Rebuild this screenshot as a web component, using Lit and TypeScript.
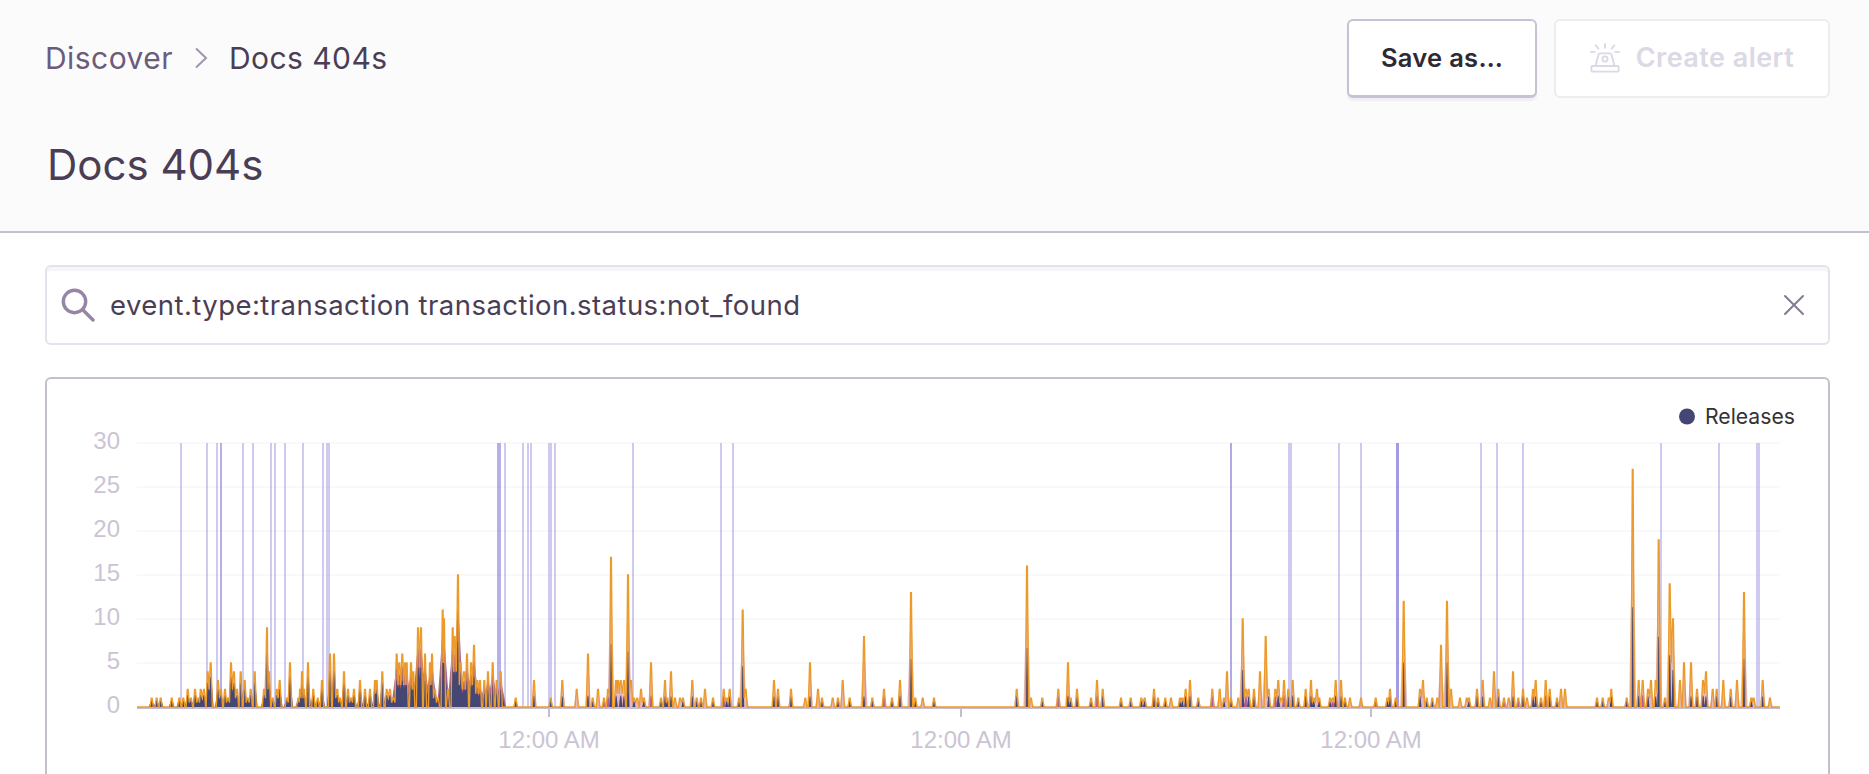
import { LitElement, html, css, svg } from "lit";
import { customElement } from "lit/decorators.js";

const RAW: [number, number[]][] = [
  [80, [215,1,230,1,242,1,275,1,298,1,310,1,323,2,333,1,345,2,355,1,362,2,372,2,383,4,392,5,414,3,423,2,435,2,444,1,453,5,462,4,471,2,482,4,494,3,503,1,512,2,524,4,552,2,561,9,567,4,578,1,590,2,599,3,620,1,630,5,655,1,660,2,666,4,672,2,684,5,700,2,713,1,726,3,750,6,762,6,772,2,780,1,792,4,804,2,813,1,822,2,840,3,855,2,870,2,885,3,890,3,907,4,920,2,930,2,940,1,950,6,958,5,967,6,975,5,980,5,993,5,1000,4,1014,9,1023,9,1035,6,1050,5,1056,6,1065,2,1074,1,1088,11,1092,10,1104,2,1118,9,1124,8,1134,15,1142,5,1152,4,1161,6,1173,5,1182,7,1192,3,1200,3,1213,3,1224,4,1238,5,1250,3,1262,4,1307,1]],
  [530, [12,3,62,1,97,3,140,2,174,6,188,1,204,2,222,1,234,2,243,17,258,3,264,3,272,3,282,3,294,15,303,3,312,1,322,1,333,2,342,1,363,5,393,1,405,3,412,1,423,4,435,1,450,1,459,1,487,3,500,1,513,1,525,2,549,1,581,2,590,1,599,2,627,1,638,11,647,2,732,3,744,2,783,2,826,1,840,5,864,2,876,1,908,1,924,1,938,3,959,1,1002,8,1027,1,1062,2,1086,1,1110,3,1143,13,1156,1,1178,1,1212,1]],
  [980, [110,2,141,16,153,1,187,1,235,2,264,5,272,1,291,2,333,1,351,3,368,2,423,1,452,1,484,1,494,1,522,2,534,1,556,1,573,1,600,1,607,1,617,2,630,3,655,1,697,2,719,2,732,1,741,4,753,1,775,1,788,10,798,2,806,2,822,2,840,4,857,8,866,2,886,2,895,3,904,1,912,3,925,2,938,3,955,1,977,2,993,3,1001,1,1011,2,1018,1,1050,1,1058,1,1067,3,1083,3,1095,1,1110,1,1143,1,1187,1,1222,1,1230,2,1247,1,1271,12,1320,2,1329,3,1340,1]],
  [1430, [7,1,22,1,33,7,51,12,63,2,90,1,110,1,117,1,141,2,158,3,180,1,192,4,205,2,222,1,236,1,249,4,265,1,279,2,291,1,309,2,317,3,333,1,347,3,359,2,381,1,393,2,405,2,501,1,518,1,536,1,544,2,590,1,608,27,626,3,638,3,654,2,663,3,677,3,686,19,705,1,719,14,729,10,750,3,762,5,783,5,801,2,819,3,828,4,848,2,860,2,880,3,902,2,921,3,942,13,964,1,971,1,998,3,1020,1]],
];

type Peak = { x: number; v: number };
const PEAKS: Peak[] = [];
for (const [base, list] of RAW) {
  for (let i = 0; i < list.length; i += 2) PEAKS.push({ x: base + list[i] / 3, v: list[i + 1] });
}

const RELEASES: [number, number, number][] = [
  [181,2,.36],[207,2,.36],[217,2,.36],[221,2,.55],[243,2,.36],[253,2,.36],[271,2,.36],[275,2,.36],[285,2,.36],[303,2,.36],[323,2,.36],[328,4,.36],
  [499,4,.55],[505,2,.36],[523,2,.36],[528,2,.36],[531,2,.36],[550,4,.36],[555,2,.36],[633,2,.36],[721,2,.36],[733,2,.36],
  [1231,2,.6],[1290,4,.36],[1339,2,.36],[1361,2,.36],[1397,3,.7],[1481,2,.36],[1497,2,.36],[1523,2,.36],[1661,2,.36],[1719,2,.36],[1758,4,.36],
];

const X0 = 137, X1 = 1780, Y0 = 707, U = 8.8;
const Y = (v: number) => Y0 - v * U;
const hash = (n: number) => (Math.floor(n * 7.3) * 2654435761 >>> 0) % 97;

function linePath() {
  let d = `M${X0} ${Y0}`;
  PEAKS.forEach((p, i) => {
    const next = PEAKS[i + 1];
    const prev = PEAKS[i - 1];
    const top = Y(p.v);
    const gapPrev = prev ? p.x - prev.x : 99;
    if (gapPrev > 3.6) d += `L${(p.x - 1.6).toFixed(1)} ${Y0}`;
    d += `L${(p.x - 0.4).toFixed(1)} ${top.toFixed(1)}L${(p.x + 0.4).toFixed(1)} ${top.toFixed(1)}`;
    const gapNext = next ? next.x - p.x : 99;
    if (gapNext > 3.6) d += `L${(p.x + 1.6).toFixed(1)} ${Y0}`;
    else d += `L${(p.x + gapNext / 2).toFixed(1)} ${Y(Math.min(p.v, next.v) * 0.5).toFixed(1)}`;
  });
  return d + `L${X1} ${Y0}`;
}

function polys(h: (p: Peak) => number, w: (p: Peak) => number) {
  let d = "";
  for (const p of PEAKS) {
    const t = h(p);
    if (t <= 0) continue;
    const ww = w(p);
    d += `M${(p.x - ww).toFixed(1)} ${Y0}L${(p.x - 0.5).toFixed(1)} ${Y(t).toFixed(1)}L${(p.x + 0.5).toFixed(1)} ${Y(t).toFixed(1)}L${(p.x + ww).toFixed(1)} ${Y0}Z`;
  }
  return d;
}

const dense = (x: number) => x > 395 && x < 502;
const haloPath = polys((p) => p.v * 0.8, (p) => (p.v > 6 ? 3.6 : 3));
const pinkPath = polys(
  (p) => (dense(p.x) ? p.v * 0.74 : hash(p.x) % 3 === 0 ? Math.min(p.v * 0.6, 1.3) : 0),
  (p) => (dense(p.x) ? 5.5 : 2)
);
const navyPath = polys(
  (p) => {
    if (dense(p.x)) return Math.max(1, p.v * 0.5);
    if (p.x < 395) return Math.max(0.8, p.v * 0.68);
    if (p.v >= 9) return p.v * 0.42;
    return hash(p.x) % 5 < 3 ? Math.min(p.v * 0.65, 1.2) : 0;
  },
  (p) => (dense(p.x) ? 4.2 : p.x < 395 ? 2.8 : 1.5)
);
const LINE = linePath();

@customElement("app-root")
export class AppRoot extends LitElement {
  static styles = css`
    :host { display: block; height: 100vh; overflow: hidden; background: #fff; font-family: Inter, "Noto Sans", sans-serif; color: #4a3e56; }
    .header { height: 231px; box-sizing: border-box; background: #fbfbfb; padding: 19px 39px 0 45px; }
    .rule { height: 2px; background: #c6becf; }
    .top { display: flex; justify-content: space-between; align-items: flex-start; }
    .crumbs { display: flex; align-items: center; height: 78px; font-size: 30px; letter-spacing: 0.45px; }
    .crumb1 { color: #6c5c7c; }
    .chev { width: 14px; height: 22px; margin: 0 21px 0 21px; fill: none; stroke: #a294b0; stroke-width: 2; }
    .actions { display: flex; gap: 17px; }
    .btn { height: 79px; box-sizing: border-box; border-radius: 6px; background: #fff; display: flex; align-items: center; justify-content: center; font-weight: 600; padding-bottom: 2px; }
    .save { width: 190px; border: 2px solid #c9c1d3; border-bottom-width: 3px; color: #2f2936; box-shadow: 0 3px 2px rgba(70, 50, 100, 0.06); font-size: 25.5px; letter-spacing: 0.3px; }
    .alert { width: 276px; border: 2px solid #eeebf1; color: #dcd8e4; gap: 16px; font-size: 27px; letter-spacing: 0.45px; }
    .siren { width: 30px; height: 30px; fill: none; stroke: #dcd8e4; stroke-width: 2; stroke-linecap: round; stroke-linejoin: round; }
    h1 { margin: 37px 0 0 2px; font-size: 42px; line-height: 60px; font-weight: 400; color: #4a3e56; }
    .body { padding: 32px 39px 0 45px; }
    .search { height: 80px; box-sizing: border-box; border: 2px solid #e6e1ec; border-radius: 6px; box-shadow: inset 0 4px 0 #f6f6f9; display: flex; align-items: center; padding: 0 22px 0 14px; background: #fff; }
    .mag { width: 34px; height: 34px; fill: none; stroke: #9686a5; stroke-width: 3.4; stroke-linecap: round; flex: none; margin-right: 15px; }
    .q { flex: 1; font-size: 27.5px; letter-spacing: 0.45px; color: #4a3e56; }
    .x { width: 24px; height: 24px; fill: none; stroke: #857a92; stroke-width: 2; stroke-linecap: round; flex: none; }
    .panel { margin-top: 32px; height: 500px; box-sizing: border-box; border: 2px solid #c6becf; border-radius: 6px; background: #fff; }
    .chart { display: block; }
    .tick { font-family: "Liberation Sans", Arial, sans-serif; font-size: 24px; fill: #cbc4d4; }
    .leg { font-family: Inter, sans-serif; font-size: 21.2px; fill: #333; }
  `;

  render() {
    const grid = [0, 5, 10, 15, 20, 25, 30];
    return html`
      <div class="header">
        <div class="top">
          <div class="crumbs">
            <span class="crumb1">Discover</span>
            <svg class="chev" viewBox="0 0 14 22"><path d="M2 1.5 L12 11 L2 20.5"></path></svg>
            <span>Docs 404s</span>
          </div>
          <div class="actions">
            <div class="btn save">Save as…</div>
            <div class="btn alert">
              <svg class="siren" viewBox="0 0 32 32">
                <rect x="1.5" y="24.5" width="29" height="6" rx="1"></rect>
                <path d="M6 24 L9 12.5 Q9.5 11 11 11 H21 Q22.5 11 23 12.5 L26 24"></path>
                <circle cx="16" cy="17" r="2.8"></circle>
                <path d="M16 1 V5 M6 2.5 L9 6 M26 2.5 L23 6 M1 9.5 H5 M27 9.5 H31"></path>
              </svg>
              <span>Create alert</span>
            </div>
          </div>
        </div>
        <h1>Docs 404s</h1>
      </div>
      <div class="rule"></div>
      <div class="body">
        <div class="search">
          <svg class="mag" viewBox="0 0 34 34"><circle cx="13.5" cy="13.5" r="11.2"></circle><path d="M22 22 L32 32"></path></svg>
          <div class="q">event.type:transaction transaction.status:not_found</div>
          <svg class="x" viewBox="0 0 24 24"><path d="M3 3 L21 21 M21 3 L3 21"></path></svg>
        </div>
        <div class="panel">
          <svg class="chart" width="1780" height="496" viewBox="47 379 1780 496">
            <defs>
              <linearGradient id="halo" x1="0" y1="443" x2="0" y2="707" gradientUnits="userSpaceOnUse">
                <stop offset="0" stop-color="#ef9c2c" stop-opacity=".85"></stop>
                <stop offset=".7" stop-color="#dc9a68" stop-opacity=".65"></stop>
                <stop offset=".95" stop-color="#d1808c" stop-opacity=".55"></stop>
              </linearGradient>
            </defs>
            ${grid.slice(1).map((g) => svg`<rect x=${X0} y=${Y(g) - 1} width=${X1 - X0} height="2" fill="#f9f9fa"></rect>`)}
            ${grid.map((g) => svg`<text class="tick" x="120" y=${Y(g) + 6} text-anchor="end">${g}</text>`)}
            ${RELEASES.map(([x, w, o]) => svg`<rect x=${Math.round(x - w / 2)} y="443" width=${w} height="264" fill="#7a70d6" opacity=${o}></rect>`)}
            <rect x=${X0} y="707" width=${X1 - X0} height="2" fill="#c6becf"></rect>
            ${[549, 961, 1371].map((x) => svg`
              <rect x=${x - 1} y="709" width="2" height="8" fill="#c6becf"></rect>
              <text class="tick" x=${x} y="748" text-anchor="middle">12:00 AM</text>`)}
            <path d=${haloPath} fill="url(#halo)"></path>
            <path d=${pinkPath} fill="#a04f8a" opacity=".85"></path>
            <path d=${navyPath} fill="#444674"></path>
            <path d=${LINE} fill="none" stroke="#ec9a2a" stroke-width="1.35" stroke-linejoin="miter"></path>
            <circle cx="1687" cy="416.5" r="8" fill="#444674"></circle>
            <text class="leg" x="1705" y="423.5">Releases</text>
          </svg>
        </div>
      </div>
    `;
  }
}
